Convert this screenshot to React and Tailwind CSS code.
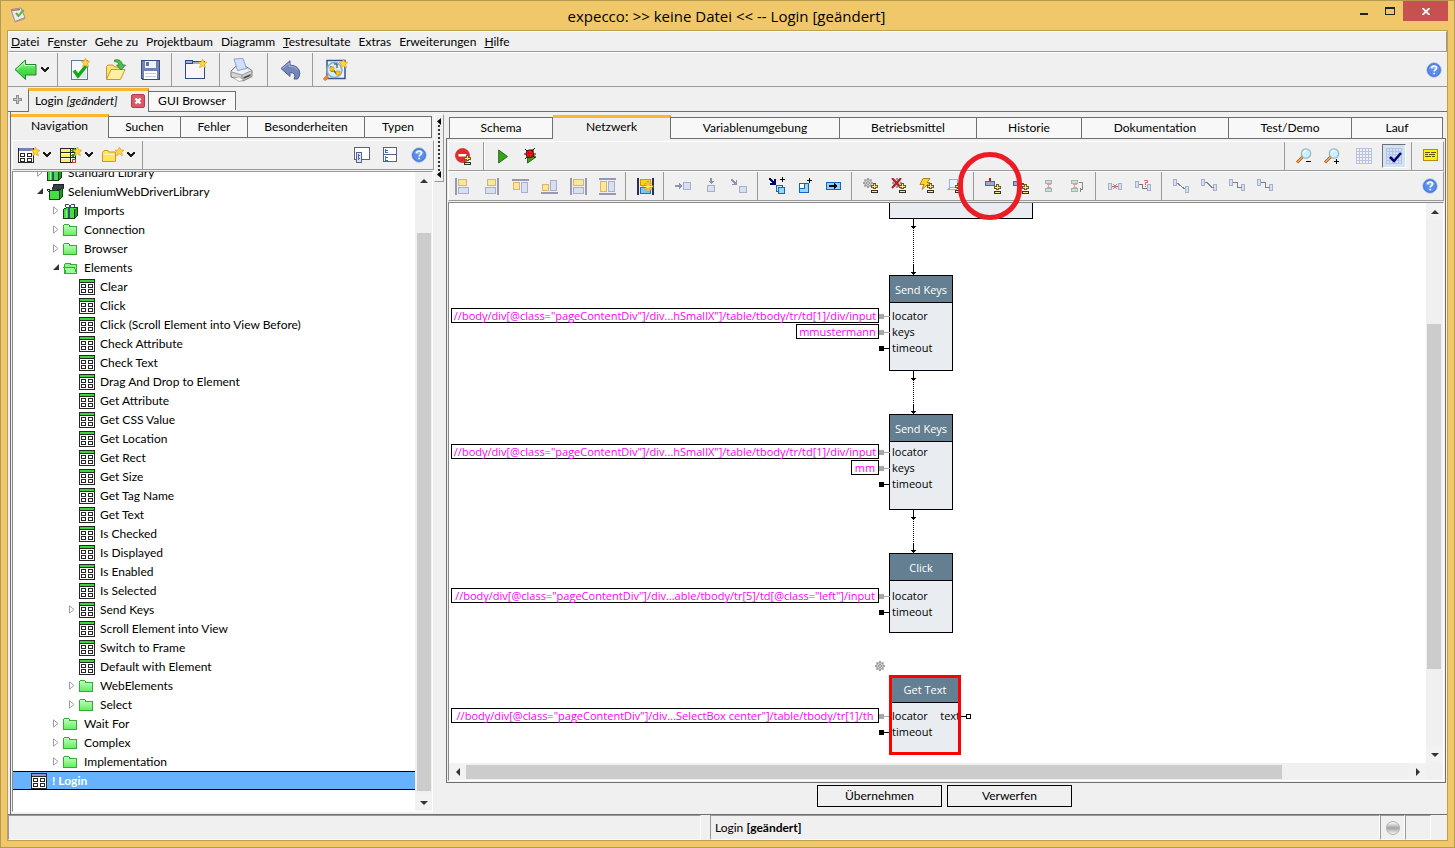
import React, { useState } from 'react';

const menus = [
    ['', 'D', 'atei'], ['F', 'e', 'nster'], ['Gehe zu', '', ''], ['Projektbaum', '', ''], ['Diagramm', '', ''],
    ['', 'T', 'estresultate'], ['Extras', '', ''], ['Erweiterungen', '', ''], ['', 'H', 'ilfe'],
];

// [level, icon, label, arrow]
const treeRows = [
    [1, 'lib', 'Standard Library', 'closed'],
    [1, 'openlib', 'SeleniumWebDriverLibrary', 'open'],
    [2, 'lib', 'Imports', 'closed'],
    [2, 'folder', 'Connection', 'closed'],
    [2, 'folder', 'Browser', 'closed'],
    [2, 'openfolder', 'Elements', 'open'],
    [3, 'block', 'Clear'],
    [3, 'block', 'Click'],
    [3, 'block', 'Click (Scroll Element into View Before)'],
    [3, 'block', 'Check Attribute'],
    [3, 'block', 'Check Text'],
    [3, 'block', 'Drag And Drop to Element'],
    [3, 'block', 'Get Attribute'],
    [3, 'block', 'Get CSS Value'],
    [3, 'block', 'Get Location'],
    [3, 'block', 'Get Rect'],
    [3, 'block', 'Get Size'],
    [3, 'block', 'Get Tag Name'],
    [3, 'block', 'Get Text'],
    [3, 'block', 'Is Checked'],
    [3, 'block', 'Is Displayed'],
    [3, 'block', 'Is Enabled'],
    [3, 'block', 'Is Selected'],
    [3, 'block', 'Send Keys', 'closed'],
    [3, 'block', 'Scroll Element into View'],
    [3, 'block', 'Switch to Frame'],
    [3, 'block', 'Default with Element'],
    [3, 'folder', 'WebElements', 'closed'],
    [3, 'folder', 'Select', 'closed'],
    [2, 'folder', 'Wait For', 'closed'],
    [2, 'folder', 'Complex', 'closed'],
    [2, 'folder', 'Implementation', 'closed'],
    [0, 'test', '! Login'],
];

const indent = ['pl-[7px]', 'pl-[23px]', 'pl-[39px]', 'pl-[55px]'];

/* ---------- icons ---------- */

const Svg = ({ w = 16, h = 16, crisp = true, children }) => (
    <svg width={w} height={h} viewBox={`0 0 ${w} ${h}`} className="shrink-0" fill="none" shapeRendering={crisp ? 'crispEdges' : 'auto'}>
        {children}
    </svg>
);

const Star = ({ x = 0, y = 0 }) => (
    <path transform={`translate(${x} ${y})`} d="M4.5 0 L5.8 3 L9 3.2 L6.6 5.4 L7.5 8.8 L4.5 7 L1.6 8.8 L2.4 5.4 L0 3.2 L3.2 3Z" fill="#ffd83d" stroke="#e0a32e" strokeWidth=".7" shapeRendering="auto" />
);

const PlusMinus = ({ x = 0, y = 0 }) => (
    <g transform={`translate(${x} ${y})`}>
        <path d="M2 0h3v2h2v3h-2v1h-3v-1h-2v-3h2z" fill="#6b5a28" />
        <path d="M0 7h7v3h-7z" fill="#3a3320" />
        <path d="M3 1h1v2h2v1h-2v1h-1v-1h-2v-1h2zM1 8h5v1h-5z" fill="#ffe680" />
    </g>
);

const Gear = ({ x = 0, y = 0 }) => (
    <g transform={`translate(${x} ${y})`} shapeRendering="auto">
        <path d="M5 0v10M0 5h10M1.500 1.500l7 7M8.500 1.500l-7 7" stroke="#8a8a8a" strokeWidth="1.600" />
        <circle cx="5" cy="5" r="3.400" fill="#dadada" stroke="#8e8e8e" strokeWidth=".9" />
        <circle cx="5" cy="5" r="1.400" fill="#fafafa" stroke="#7a7a7a" strokeWidth=".9" />
    </g>
);

const Caret = () => (
    <Svg w={8} h={6}>
        <path d="M0 0h2v1h1v1h2v-1h1v-1h2v2h-1v1h-1v1h-1v1h-2v-1h-1v-1h-1v-1h-1z" fill="#1c1c1c" />
    </Svg>
);

const AppIcon = () => (
    <Svg w={16} h={16} crisp={false}>
        <path d="M1 2.500l10-1.500 4 9.500-10 4z" fill="#e9edf2" stroke="#8e9297" />
        <path d="M1 2.500l4 12 10-4v1.500l-10 3.500z" fill="#c98872" />
        <path d="M2 3.500l8-1" stroke="#d06a55" strokeWidth="1.500" />
        <path d="M6 6l2.500 3 5-6" stroke="#5db347" strokeWidth="2" />
    </Svg>
);

const HelpIcon = () => (
    <Svg w={16} h={16} crisp={false}>
        <circle cx="8" cy="8" r="7.200" fill="#5b8df0" stroke="#a9c3ea" />
        <circle cx="8" cy="8" r="6.300" stroke="#4269c4" strokeWidth=".8" />
        <path d="M3 6a5.500 4.500 0 0 1 10 0q-5 2.500-10 0z" fill="#9dbcf8" opacity=".7" />
        <path d="M5.700 6.300q0-2.300 2.400-2.300 2.300 0 2.300 2 0 1.200-1.300 1.900-.9.500-.9 1.500M8.200 10.700v1.600" stroke="#fff" strokeWidth="1.700" />
    </Svg>
);

const BackIcon = () => (
    <Svg w={23} h={21} crisp={false}>
        <defs>
            <linearGradient id="back" x1="0" y1="0" x2="0" y2="1"><stop offset="0" stopColor="#a8f59a" /><stop offset=".5" stopColor="#4be04b" /><stop offset="1" stopColor="#36c93a" /></linearGradient>
        </defs>
        <path d="M1 10.500L11.500 1v4.500h10.500v10.500h-10.500v4.500z" fill="url(#back)" stroke="#23892a" />
        <path d="M3 10.500L10.500 3.500v3h10.500" stroke="#d3ffcb" />
    </Svg>
);

const NewTestIcon = () => (
    <Svg w={21} h={23} crisp={false}>
        <rect x="1.500" y="2.500" width="16" height="19" fill="#f5f9fd" stroke="#60789b" />
        <path d="M3 20h13v-13z" fill="#dbe7f4" />
        <path d="M4 12.500l4 5.500 8-10" stroke="#12a812" strokeWidth="3.400" />
        <Star x={11} y={0} />
    </Svg>
);

const OpenIcon = () => (
    <Svg w={22} h={22} crisp={false}>
        <path d="M1.500 20.500v-13l1.500-1.500h5l1.500 2h7v3" fill="#ffe27a" stroke="#cf9620" />
        <path d="M1.500 20.500l4.500-10h14l-4.500 10z" fill="#fff0a6" stroke="#cf9620" />
        <path d="M9.500 1q7-1.500 8 5h3l-4.500 5-4.500-5h2.800q-.5-3.500-4.800-3.500z" fill="#4bc24b" stroke="#258a2c" strokeWidth=".9" />
    </Svg>
);

const SaveIcon = () => (
    <Svg w={19} h={20}>
        <path d="M1 .5h17.500v19h-16.500l-1.500-1.500v-17z" fill="#6f83b4" stroke="#3b4c80" />
        <rect x="4" y="1" width="11" height="7" fill="#eef1f8" />
        <rect x="5" y="2" width="3" height="4" fill="#5f73a6" />
        <rect x="3" y="11" width="13" height="8" fill="#fff" />
        <path d="M4 13.500h11M4 16.500h11" stroke="#c2cce2" />
    </Svg>
);

const NewWindowIcon = () => (
    <Svg w={24} h={21}>
        <rect x="1.500" y="2.500" width="19" height="17" fill="#f8f6fa" stroke="#304a80" />
        <path d="M1.500 1.500h7v3h-7z" fill="#9fb0d8" stroke="#304a80" />
        <path d="M9 4h11" stroke="#9fb0d8" strokeWidth="2" />
        <Star x={14} y={0} />
    </Svg>
);

const PrintIcon = () => (
    <Svg w={24} h={24} crisp={false}>
        <path d="M1 13l5-5 3 2.500 7-2 6 4v6l-9 4.500-12-4z" fill="#d4d4d4" stroke="#7a7a7a" />
        <path d="M1.500 13.500l5-4 15 2.500-9.500 5z" fill="#f2f2f2" />
        <path d="M4 1l9-.500 3.500 10-9 2z" fill="#cfe0fa" stroke="#8ba3cc" />
        <path d="M1.500 14l10.500 3 10-4.500" stroke="#9a9a9a" />
        <path d="M12 17v5.500" stroke="#8a8a8a" />
        <path d="M13.500 19l7-3v2l-7 3z" fill="#4c4c4c" />
        <path d="M4 20l5-1 5 3-5 1.500z" fill="#fafafa" stroke="#999" strokeWidth=".7" />
    </Svg>
);

const UndoIcon = () => (
    <Svg w={21} h={20} crisp={false}>
        <path d="M1 8.500L10 .800v4.200q9 .500 9.800 8 0 3.500-2.300 6h-3.500q3-6-4-6.500v4z" fill="#7387bb" stroke="#4c5f93" />
        <path d="M2.500 8.500l6.500-5.500v3q6 0 8.500 3.500" stroke="#a8b7dd" />
    </Svg>
);

const SearchTestIcon = () => (
    <Svg w={26} h={22} crisp={false}>
        <rect x="4" y="1.500" width="18" height="18" fill="#f2f5fb" stroke="#3a5288" strokeWidth="1.500" />
        <path d="M1 21l4-4" stroke="#e8843a" strokeWidth="3.500" />
        <circle cx="11.500" cy="11" r="7.500" fill="#d5edf7" stroke="#7fb0c8" strokeWidth="1.600" />
        <path d="M8 7v5h4v2h4M11 5h3v4" stroke="#303030" />
        <path d="M7 8h4v4h-4zM13 12h4v4h-4z" fill="#ffc61a" stroke="#c98e10" strokeWidth=".6" />
        <Star x={16} y={0} />
    </Svg>
);

const BlockIcon = ({ head = '#38d838' }) => (
    <Svg w={16} h={16}>
        <rect x=".5" y=".5" width="15" height="15" fill="#fff" stroke="#262626" />
        <rect x="1" y="1" width="14" height="2" fill={head} />
        <path d="M1 3.500h14" stroke="#262626" />
        <path d="M2.500 5.500h4v3h-4zM9.500 5.500h4v3h-4zM2.500 10.500h4v3h-4zM9.500 10.500h4v3h-4z" stroke="#262626" />
    </Svg>
);

const NewBlockIcon = () => (
    <Svg w={22} h={17}>
        <rect x=".5" y="1.500" width="15" height="14" fill="#fff" stroke="#262626" />
        <rect x="1" y="1" width="14" height="3" fill="#7383bd" />
        <path d="M2.500 6.500h4v3h-4zM9.500 6.500h4v3h-4zM2.500 11.500h4v3h-4zM9.500 11.500h4v3h-4z" stroke="#262626" />
        <Star x={13} y={0} />
    </Svg>
);

const NewSuiteIcon = () => (
    <Svg w={22} h={17}>
        <path d="M.5 1.500h15v14h-15z" fill="#fff" stroke="#262626" />
        <path d="M1 2h10v3h-10zM1 7h10v3h-10zM1 12h10v3h-10z" fill="#fff06a" />
        <path d="M1 5.500h15M1 10.500h15M10.500 1v15" stroke="#262626" />
        <path d="M12 3l1 1 2-2M12 8l1 1 2-2" stroke="#18a018" strokeWidth="1.500" />
        <path d="M12 12h3v3h-3z" fill="#fff" stroke="#e03020" />
        <Star x={13} y={0} />
    </Svg>
);

const NewFolderIcon = () => (
    <Svg w={22} h={16} crisp={false}>
        <path d="M.5 14.500v-9l1.500-2h4l1 1.500h6.500v9.500z" fill="#ffe45c" stroke="#d29a1c" />
        <path d="M1.500 7.500h11" stroke="#fff6b8" />
        <Star x={13} y={0} />
    </Svg>
);

const PaneIcon = () => (
    <Svg w={16} h={16}>
        <rect x=".5" y=".5" width="15" height="12" fill="#fff" stroke="#5e5e8c" />
        <rect x="2.500" y="5.500" width="5" height="10" fill="#d8e8f8" stroke="#5e5e8c" />
        <path d="M4.500 7v6M5 8.500h1M5 11.500h1" stroke="#3a70b0" />
    </Svg>
);

const SplitIcon = () => (
    <Svg w={15} h={16}>
        <rect x=".5" y=".5" width="13" height="14" fill="#fff" stroke="#5e5e8c" />
        <path d="M1 7.500h13" stroke="#5e5e8c" />
        <path d="M2.500 2v4M3 3.500h2M3 5.500h2M2.500 9v5M3 10.500h2M3 13.500h2" stroke="#2f78b8" />
    </Svg>
);

const FolderIcon = () => (
    <Svg w={14} h={12}>
        <defs>
            <linearGradient id="fold" x1="0" y1="0" x2="0" y2="1"><stop offset="0" stopColor="#c4ffc0" /><stop offset="1" stopColor="#5fee5c" /></linearGradient>
        </defs>
        <path d="M.5 11.500v-9.500l1-1.500h4l1.500 2h6.500v9z" fill="url(#fold)" stroke="#35ad35" />
    </Svg>
);

const OpenFolderIcon = () => (
    <Svg w={15} h={12}>
        <path d="M1.500 11.500v-9l1-1.500h4l1.500 1.500h5.500v9z" fill="#8df58a" stroke="#35ad35" />
        <path d="M3 11.500l-2-6h10.500l2 6z" fill="#9dfb98" stroke="#35ad35" />
    </Svg>
);

const LibIcon = () => (
    <Svg w={15} h={16}>
        <path d="M.5 6.500l3-2h10.500v8l-3 3h-10.500z" fill="#45dd45" stroke="#1c3a1c" />
        <path d="M11 7v8l3-2.500v-8z" fill="#229a22" />
        <path d="M11.500 6v9" stroke="#1c3a1c" />
        <path d="M6 5v10" stroke="#3c4c7c" strokeWidth="2" />
        <path d="M3.500 7v8" stroke="#8df58a" />
        <path d="M2.500 3.500v-2h3l1.500 2 1.500-2h3v2M4 4.500h7" stroke="#3c4c60" />
    </Svg>
);

const OpenLibIcon = () => (
    <Svg w={17} h={16}>
        <path d="M5 5l2-5h9.500v4l-2 2z" fill="#3a4048" stroke="#15181c" strokeWidth=".8" />
        <path d="M2.500 6.500h9.500v9h-9.500z" fill="#45dd45" stroke="#15401c" />
        <path d="M12 6.500l3-2v8.500l-3 2.500z" fill="#229a22" stroke="#15401c" />
        <path d="M0 5.500h3M.5 6l2 3" stroke="#15401c" />
    </Svg>
);

const treeIcons = {
    lib: <LibIcon />,
    openlib: <OpenLibIcon />,
    folder: <FolderIcon />,
    openfolder: <OpenFolderIcon />,
    block: <BlockIcon />,
    test: <BlockIcon head="#8c97d0" />,
};

const StopIcon = () => (
    <Svg w={17} h={17} crisp={false}>
        <circle cx="7.500" cy="7.500" r="7" fill="#e32b2b" stroke="#c93232" strokeWidth=".8" />
        <rect x="3.500" y="6" width="8" height="2.500" fill="#fff" />
        <g shapeRendering="crispEdges"><PlusMinus x={9} y={7} /></g>
    </Svg>
);

const PlayIcon = () => (
    <Svg w={10} h={15} crisp={false}>
        <path d="M.7 1l8.800 6.500-8.800 6.500z" fill="#38a31c" stroke="#1c6f10" />
    </Svg>
);

const BugIcon = () => (
    <Svg w={13} h={16} crisp={false}>
        <path d="M3.500 2.500l8.500 6.500-8.500 6z" fill="#38a31c" stroke="#1c6f10" />
        <path d="M1 1l3 3M11 0l-3 3M0 6h3M9 6h3M1 11l3-3M9 8l2 2" stroke="#111" />
        <ellipse cx="5.800" cy="5.800" rx="3.800" ry="4" fill="#f01414" stroke="#400" strokeWidth=".8" />
        <circle cx="4.500" cy="5" r=".6" fill="#200" /><circle cx="7.300" cy="5.500" r=".6" fill="#200" /><circle cx="5.500" cy="8" r=".6" fill="#200" />
        <path d="M6.500 1.500h3v2.500z" fill="#111" />
    </Svg>
);

const ZoomIcon = ({ plus }) => (
    <Svg w={17} h={17} crisp={false}>
        <path d="M1 14.500l6-6" stroke="#b5601c" strokeWidth="3" /><path d="M1.500 14l5-5" stroke="#f2a65a" strokeWidth="1.200" />
        <circle cx="10" cy="5.500" r="4.700" fill="#cdeefa" stroke="#8fb6c8" strokeWidth="1.200" />
        <path d="M7.500 5a2.700 2.700 0 0 1 3-2.500" stroke="#fff" strokeWidth="1.300" />
        <path d={plus ? 'M10 13.500h5M12.500 11v5' : 'M10 13.500h5'} stroke="#000" shapeRendering="crispEdges" />
    </Svg>
);

const GridIcon = ({ check }) => (
    <Svg w={17} h={17}>
        <path d="M.5 0v16M3.500 0v16M6.500 0v16M9.500 0v16M12.500 0v16M15.500 0v16M0 .5h16M0 3.500h16M0 6.500h16M0 9.500h16M0 12.500h16M0 15.500h16" stroke="#b9c3e0" />
        {check && <path d="M4 9l4 4 7-8" stroke="#00007a" strokeWidth="2.500" shapeRendering="auto" />}
    </Svg>
);

const NoteIcon = () => (
    <Svg w={15} h={12}>
        <rect x=".5" y=".5" width="14" height="11" rx="1" fill="#fff200" stroke="#b8891c" />
        <path d="M2 3.500h5M8 3.500h5M2 5.500h3M6 5.500h6M2 7.500h6M9 7.500h3" stroke="#5c5200" />
    </Svg>
);

const Y = { fill: '#fbe69a', stroke: '#d9b46a' };
const B = { fill: '#d8dfef', stroke: '#a5afd0' };

const alignIcons = [
    ['links', <Svg w={15} h={17}><path d="M1 0v17" stroke="#9a97b0" strokeWidth="2" /><rect x="3.500" y="1.500" width="8" height="6" {...Y} /><rect x="3.500" y="9.500" width="10" height="6" {...B} /></Svg>],
    ['rechts', <Svg w={15} h={17}><path d="M14 0v17" stroke="#9a97b0" strokeWidth="2" /><rect x="3.500" y="1.500" width="8" height="6" {...Y} /><rect x="1.500" y="9.500" width="10" height="6" {...B} /></Svg>],
    ['oben', <Svg w={17} h={15}><path d="M0 1h17" stroke="#9a97b0" strokeWidth="2" /><rect x="1.500" y="3.500" width="6" height="7" {...Y} /><rect x="9.500" y="3.500" width="6" height="10" {...B} /></Svg>],
    ['unten', <Svg w={17} h={15}><path d="M0 14h17" stroke="#9a97b0" strokeWidth="2" /><rect x="1.500" y="5.500" width="6" height="6" {...Y} /><rect x="9.500" y="1.500" width="6" height="10" {...B} /></Svg>],
    ['horizontal', <Svg w={17} h={17}><path d="M1 0v17M16 0v17" stroke="#9a97b0" strokeWidth="2" /><rect x="3.500" y="1.500" width="10" height="6" {...Y} /><rect x="3.500" y="9.500" width="10" height="6" {...B} /></Svg>],
    ['vertikal', <Svg w={17} h={17}><path d="M0 1h17M0 16h17" stroke="#9a97b0" strokeWidth="2" /><rect x="1.500" y="3.500" width="6" height="10" {...Y} /><rect x="9.500" y="3.500" width="6" height="10" {...B} /></Svg>],
];

const AutoAlignIcon = () => (
    <Svg w={17} h={17}>
        <path d="M1 0v17M16 0v17" stroke="#2d2d50" strokeWidth="2" />
        <rect x="3.500" y="1.500" width="10" height="6" fill="#ffd21c" stroke="#e08a10" />
        <rect x="3.500" y="9.500" width="10" height="6" fill="#7cc8f5" stroke="#1c6bd0" />
        <path d="M11 3v11M5.500 8.500h11M7.500 5l7 7M14.500 5l-7 7" stroke="#f08c10" strokeWidth="2" shapeRendering="auto" />
        <path d="M11 4v9M6.500 8.500h9M8 5.500l6 6M14 5.500l-6 6" stroke="#fff36a" shapeRendering="auto" />
    </Svg>
);

const insertIcons = [
    ['Eingang', <Svg><path d="M0 7h4v-2l3 3-3 3v-2h-4z" fill="#8f93ac" /><rect x="8.500" y="4.500" width="7" height="7" {...B} /></Svg>],
    ['Eingang oben', <Svg w={10}><path d="M4 0h2v3h2l-3 3-3-3h2z" fill="#8f93ac" /><rect x="1.500" y="7.500" width="7" height="6" {...B} /></Svg>],
    ['Eingang diagonal', <Svg><path d="M0 1h2v1h1v1h1v1h1v-2h1v5h-5v-1h2v-1h-1v-1h-1v-1h-1z" fill="#8f93ac" /><rect x="8.500" y="8.500" width="7" height="6" {...B} /></Svg>],
];

const stepIcons = [
    ['Schritt', <Svg w={17} h={18}><path d="M0 1h2v1h1v1h1v1h1v-2h2v6h-6v-2h2v-1h-1v-1h-1v-1h-1z" fill="#000080" /><path d="M11 2.500h5M13.500 0v5" stroke="#000" /><rect x="7.500" y="8.500" width="6" height="6" fill="#cfeaff" stroke="#1464c8" /><rect x="9.500" y="10.500" width="6" height="6" fill="#9ad4ff" stroke="#1464c8" /></Svg>],
    ['Block', <Svg w={14} h={16}><path d="M9 2.500h5M11.500 0v5" stroke="#000" /><rect x="1.500" y="5.500" width="9" height="9" fill="#9ad4ff" stroke="#1464c8" /><rect x="1.500" y="5.500" width="5" height="5" fill="#fff" stroke="#1464c8" /></Svg>],
    ['Konvertieren', <Svg w={15} h={8}><rect x=".5" y=".5" width="14" height="7" fill="#8fd0ff" stroke="#1464c8" /><path d="M3 4h6" stroke="#000" strokeWidth="2" /><path d="M8 1l4 3-4 3z" fill="#000" /></Svg>],
];

const triggerIcons = [
    ['Aktivierung', <Svg><Gear /><PlusMinus x={8} y={5} /></Svg>],
    ['Deaktivierung', <Svg><Gear x={1} /><path d="M1 0l9 10M10 0l-9 10" stroke="#b81c28" strokeWidth="2" shapeRendering="auto" /><PlusMinus x={8} y={5} /></Svg>],
    ['Ausnahme', <Svg><path d="M4 .5h7l-3 4h3l-8 7 2-5h-4z" fill="#ffd624" stroke="#b8801c" shapeRendering="auto" /><PlusMinus x={8} y={5} /></Svg>],
    ['Notiz', <Svg><path d="M2.500 1.500h8v8h-8z" fill="#eaf4ff" stroke="#8fb5e0" /><path d="M1 11.500l2-2h8l-2 2z" fill="#fff" stroke="#8fb5e0" /><PlusMinus x={8} y={5} /></Svg>],
];

const pinIcons = [
    ['Pin oben', <Svg><path d="M5 0v4" stroke="#b01c28" strokeWidth="2" /><rect x=".5" y="3.500" width="9" height="4" fill="#9fa8cc" stroke="#5a6490" /><PlusMinus x={9} y={6} /></Svg>],
    ['Pin rechts', <Svg><rect x=".5" y="3.500" width="7" height="4" fill="#9fa8cc" stroke="#5a6490" /><path d="M8 6h3" stroke="#b01c28" strokeWidth="2" /><PlusMinus x={9} y={6} /></Svg>],
    ['Verbinden', <Svg w={10} h={13}><rect x="1.500" y=".5" width="6" height="3" fill="#cfdbdd" stroke="#a8b2b6" /><rect x="1.500" y="8.500" width="6" height="3" fill="#cfdbdd" stroke="#a8b2b6" /><path d="M3 4.500h4M4.500 4v4M3 7.500h4" stroke="#ef9a90" /></Svg>],
    ['Verbindung drehen', <Svg w={13} h={13}><rect x=".5" y=".5" width="6" height="3" fill="#cfdbdd" stroke="#a8b2b6" /><rect x=".5" y="8.500" width="6" height="3" fill="#cfdbdd" stroke="#a8b2b6" /><path d="M2 4.500h4M3.500 4v4M2 7.500h4" stroke="#ef9a90" /><path d="M8 2.500h3.500v7h-3M9.500 7.500v4" stroke="#8a8a8a" /></Svg>],
];

const checkIcons = [
    ['Trennen', <Svg w={15} h={9}><rect x=".5" y="1.500" width="3" height="6" {...B} /><rect x="10.500" y="1.500" width="3" height="6" {...B} /><path d="M4 4.500h6" stroke="#777" /><path d="M5 2l4 5M9 2l-4 5" stroke="#e07070" /></Svg>],
    ['Umleiten', <Svg w={17} h={12}><rect x=".5" y="1.500" width="3" height="6" {...B} /><rect x="12.500" y="4.500" width="3" height="6" {...B} /><path d="M4 4.500h3v4h5" stroke="#777" /><path d="M9 .5h3v2h-2v2M10 5.500v1" stroke="#e07070" /></Svg>],
];

const routeIcons = [
    ['Direkt', 'M4 4l8 6', 7],
    ['Diagonal', 'M4 3.500h2l5 5h2', 5],
    ['Gebogen', 'M4 3.500h4v3l1 2h4', 5],
    ['Rechtwinklig', 'M4 3.500h4v5h5', 5],
].map(([name, d, y]) => [name, (
    <Svg w={17} h={14}><rect x=".5" y=".5" width="3" height="6" {...B} /><rect x="12.500" y={y + 0.5} width="3" height="6" {...B} /><path d={d} stroke="#80808a" /></Svg>
)]);

/* ---------- small parts ---------- */

const ToolGroup = ({ items, last }) => (
    <div className={`flex items-center pr-1 pl-[5px] ${last ? '' : 'border-r border-[#9a9a9a]'}`}>
        {items.map(([name, icon]) => (
            <button key={name} aria-label={name} className="flex h-7 w-7 items-center justify-center">{icon}</button>
        ))}
    </div>
);

const ArrowButton = ({ d, label }) => (
    <button aria-label={label} className="flex h-[17px] w-[17px] shrink-0 items-center justify-center bg-[#f2f2f2]">
        <svg width="8" height="8" viewBox="0 0 8 8" fill="#333"><path d={d} /></svg>
    </button>
);

const TabStrip = ({ tabs, active, onSelect, cols }) => (
    <div role="tablist" className={`grid flex-1 ${cols}`}>
        {tabs.map((t, i) => (
            <button
                key={t}
                role="tab"
                aria-selected={t === active}
                onClick={() => onSelect(t)}
                className={t === active
                    ? 'flex items-center justify-center border-r border-t-3 border-[#6f6f6f] border-t-[#fdb52e] bg-[#f0f0f0] pb-1'
                    : `mt-[2px] flex items-center justify-center border-t border-r border-b border-[#6f6f6f] bg-[#f8f8f8] ${i === 0 ? 'border-l' : ''}`}
            >
                {t}
            </button>
        ))}
    </div>
);

function TreePanel() {
    const [selected, setSelected] = useState('! Login');

    return (
        <div className="mx-px mt-px flex min-h-0 flex-1 border border-t-[#9a9a9a] border-r-white border-b-white border-l-[#8a8a8a]">
            <ul role="tree" className="min-w-0 flex-1 overflow-hidden bg-white">
                {treeRows.map(([level, icon, label, arrow], i) => (
                    <li
                        key={i}
                        role="treeitem"
                        aria-selected={label === selected}
                        onClick={() => setSelected(label)}
                        className={`flex h-[19px] items-center whitespace-nowrap ${indent[level]} ${i === 0 ? '-mt-[9px]' : ''} ${label === selected ? 'border-y border-black bg-[#66b2ff] font-bold text-white' : ''}`}
                    >
                        <span className="flex w-[11px] shrink-0 items-center pl-px">
                            {arrow === 'closed' && <svg width="6" height="9" viewBox="0 0 6 9" fill="#fff" stroke="#a0a0a0"><path d="M.5 .8v7.400l4.500-3.700z" /></svg>}
                            {arrow === 'open' && <svg width="7" height="7" viewBox="0 0 7 7" fill="#333"><path d="M6 0v6h-6z" /></svg>}
                        </span>
                        <span className="mr-[5px] flex w-4 shrink-0 items-center">{treeIcons[icon]}</span>
                        {label}
                    </li>
                ))}
            </ul>
            <div className="flex w-[17px] flex-col bg-[#f0f0f0]">
                <ArrowButton label="Nach oben" d="M0 6l4-4 4 4z" />
                <div className="grow-[44] basis-0" />
                <div className="mr-px ml-[2px] grow-[558] basis-0 bg-[#cccccc]" />
                <div className="grow-[3] basis-0" />
                <ArrowButton label="Nach unten" d="M0 2l4 4 4-4z" />
            </div>
        </div>
    );
}

const Pin = ({ label, wired }) => (
    <div className="flex h-4 items-center">
        <span className={`-ml-[11px] h-[5px] w-[5px] ${wired ? 'bg-[#a8a8a8]' : 'bg-black'}`} />
        <span className={`h-px w-[6px] ${wired ? 'bg-[#a8a8a8]' : 'bg-black'}`} />
        <span className="pl-[2px]">{label}</span>
    </div>
);

const Node = ({ title, pins, className, selected, output, gap = 'pt-[5px]' }) => (
    <div className={`absolute flex flex-col border border-black bg-[#e9edf1] text-[11px] leading-4 ${selected ? 'outline-3 -outline-offset-3 outline-[#ff0000]' : ''} ${className}`}>
        <div className="flex h-[27px] shrink-0 items-center justify-center border-b border-black bg-[#637f91] pt-[2px] text-white">{title}</div>
        <div className={`flex justify-between ${gap}`}>
            <div>
                {pins.map((p) => <Pin key={p} label={p} wired={p !== 'timeout'} />)}
            </div>
            {output && (
                <div className="flex h-4 items-center">
                    <span>{output}</span>
                    <span className="h-px w-[6px] bg-black" />
                    <span className="-mr-[11px] h-[5px] w-[5px] border border-black bg-white" />
                </div>
            )}
        </div>
    </div>
);

const Value = ({ children, className }) => (
    <div className={`absolute flex h-[15px] items-center justify-center border border-black bg-white text-[11px] leading-3 whitespace-nowrap text-[#ff00ff] ${className}`}>{children}</div>
);

// control flow between two steps
const Flow = ({ y1, y2 }) => (
    <g transform="translate(464 0)" stroke="#000">
        <path d={`M.5 ${y1}v10M.5 ${y2 - 10}v10`} />
        <path d={`M.5 ${y1 + 11}V${y2 - 10}`} strokeDasharray="1 1" />
        <path d={`M-2 ${y1 + 7}h5l-2 3h-1zM-2 ${y2 - 3}h5l-2 3h-1z`} fill="#000" stroke="none" />
    </g>
);

function Diagram() {
    return (
        <div className="relative min-w-0 flex-1 overflow-hidden bg-white font-['Open_Sans',sans-serif]">
            <svg className="absolute top-0 left-0" width="700" height="560" fill="none" shapeRendering="crispEdges">
                <Flow y1={16} y2={72} />
                <Flow y1={168} y2={211} />
                <Flow y1={307} y2={350} />
                <Gear x={426} y={458} />
            </svg>
            <div className="absolute -top-px left-[440px] h-[17px] w-[144px] border border-black bg-[#e9edf1]" />
            <Node title="Send Keys" pins={['locator', 'keys', 'timeout']} className="top-[72px] left-[440px] h-[96px] w-[64px]" />
            <Value className="top-[105px] left-[2px] w-[428px]">//body/div[@class="pageContentDiv"]/div...hSmallX"]/table/tbody/tr/td[1]/div/input</Value>
            <Value className="top-[121px] left-[347px] w-[83px]">mmustermann</Value>
            <Node title="Send Keys" pins={['locator', 'keys', 'timeout']} gap="pt-[2px]" className="top-[211px] left-[440px] h-[96px] w-[64px]" />
            <Value className="top-[241px] left-[2px] w-[428px]">//body/div[@class="pageContentDiv"]/div...hSmallX"]/table/tbody/tr/td[1]/div/input</Value>
            <Value className="top-[257px] left-[402px] w-[28px]">mm</Value>
            <Node title="Click" pins={['locator', 'timeout']} gap="pt-[7px]" className="top-[350px] left-[440px] h-[80px] w-[64px]" />
            <Value className="top-[385px] left-[2px] w-[428px]">//body/div[@class="pageContentDiv"]/div...able/tbody/tr[5]/td[@class="left"]/input</Value>
            <Node title="Get Text" pins={['locator', 'timeout']} output="text" selected className="top-[472px] left-[440px] h-[80px] w-[72px]" />
            <Value className="top-[505px] left-[2px] w-[428px]">//body/div[@class="pageContentDiv"]/div...SelectBox center"]/table/tbody/tr[1]/th</Value>
        </div>
    );
}

function Editor() {
    const [tab, setTab] = useState('Netzwerk');

    return (
        <div className="mr-px flex min-w-0 flex-1 flex-col">
            <div className="mt-[3px] flex h-6">
                <div className="w-[3px] border-b border-[#6f6f6f]" />
                <TabStrip
                    tabs={['Schema', 'Netzwerk', 'Variablenumgebung', 'Betriebsmittel', 'Historie', 'Dokumentation', 'Test/Demo', 'Lauf']}
                    active={tab}
                    onSelect={setTab}
                    cols="grid-cols-[104fr_118fr_169fr_137fr_105fr_147fr_123fr_91fr]"
                />
                <div className="w-[3px] border-b border-[#6f6f6f]" />
            </div>
            <div className="flex min-h-0 flex-1 flex-col border-x border-b border-[#6f6f6f] px-px pb-px">
                <div className="mt-[2px] flex h-[30px] border border-t-white border-r-[#9a9a9a] border-b-[#9a9a9a] border-l-white">
                    <div className="flex w-[35px] items-center border-r border-[#9a9a9a] pl-[6px]"><button aria-label="Haltepunkt"><StopIcon /></button></div>
                    <div className="flex flex-1 items-center gap-[16px] border-l border-white pl-[13px]">
                        <button aria-label="Start"><PlayIcon /></button>
                        <button aria-label="Debuggen"><BugIcon /></button>
                    </div>
                    <div className="flex items-center border-x border-[#9a9a9a] px-[5px]">
                        <button aria-label="Verkleinern" className="flex w-7 justify-center"><ZoomIcon /></button>
                        <button aria-label="Vergrößern" className="flex w-7 justify-center"><ZoomIcon plus /></button>
                        <button aria-label="Raster" className="ml-1 flex w-7 justify-center"><GridIcon /></button>
                        <button aria-label="Am Raster ausrichten" className="ml-1 flex h-6 w-6 items-center justify-center border border-t-[#707070] border-r-white border-b-white border-l-[#707070] bg-[#cfe3f7]"><GridIcon check /></button>
                    </div>
                    <div className="flex w-[31px] items-center justify-center pb-[3px] pl-[5px]"><button aria-label="Notiz anzeigen"><NoteIcon /></button></div>
                </div>
                <div className="flex h-[30px] border border-t-white border-r-[#9a9a9a] border-b-[#9a9a9a] border-l-white">
                    <div className="flex w-[177px] items-center border-r border-[#9a9a9a]">
                        {alignIcons.map(([name, icon]) => (
                            <button key={name} aria-label={`Ausrichten ${name}`} className="flex h-7 w-[29px] items-center justify-center pr-[3px]">{icon}</button>
                        ))}
                    </div>
                    <ToolGroup items={[['Automatisch ausrichten', <AutoAlignIcon />]]} />
                    <ToolGroup items={insertIcons} />
                    <ToolGroup items={stepIcons} />
                    <ToolGroup items={triggerIcons} />
                    <div className="relative flex">
                        <ToolGroup items={pinIcons} />
                        <span className="pointer-events-none absolute -top-5 -left-4 z-10 h-[68px] w-16 rounded-full border-5 border-[#ed1c24]" />
                    </div>
                    <ToolGroup items={checkIcons} />
                    <ToolGroup items={routeIcons} last />
                    <button aria-label="Hilfe" className="mr-[5px] ml-auto"><HelpIcon /></button>
                </div>
                <div className="mt-px flex min-h-0 flex-1 flex-col border border-t-[#8a8a8a] border-r-white border-b-white border-l-[#8a8a8a] bg-[#f0f0f0]">
                    <div className="flex min-h-0 flex-1">
                        <Diagram />
                        <div className="flex w-[17px] flex-col">
                            <ArrowButton label="Nach oben" d="M0 6l4-4 4 4z" />
                            <div className="grow-[104] basis-0" />
                            <div className="mr-[2px] ml-px grow-[345] basis-0 bg-[#cccccc]" />
                            <div className="grow-[77] basis-0" />
                            <ArrowButton label="Nach unten" d="M0 2l4 4 4-4z" />
                        </div>
                    </div>
                    <div className="mr-[17px] flex h-[17px]">
                        <ArrowButton label="Nach links" d="M6 0v8l-4-4z" />
                        <div className="mt-[2px] mb-px grow-[815] basis-0 bg-[#cccccc]" />
                        <div className="grow-[127] basis-0" />
                        <ArrowButton label="Nach rechts" d="M2 0v8l4-4z" />
                    </div>
                </div>
            </div>
            <div className="flex h-[31px] justify-center gap-[5px] pt-[2px] pr-[3px]">
                <button className="h-[22px] w-[125px] border border-black">Übernehmen</button>
                <button className="h-[22px] w-[125px] border border-black">Verwerfen</button>
            </div>
        </div>
    );
}

function Navigation() {
    const [tab, setTab] = useState('Navigation');

    return (
        <div className="ml-[2px] flex w-[424px] shrink-0 flex-col border-l border-[#6f6f6f] pb-[2px]">
            <div className="mt-[2px] flex h-6">
                <TabStrip
                    tabs={['Navigation', 'Suchen', 'Fehler', 'Besonderheiten', 'Typen']}
                    active={tab}
                    onSelect={setTab}
                    cols="grid-cols-[98fr_72fr_67fr_117fr_67fr]"
                />
                <div className="w-[2px]" />
            </div>
            <div className="mt-[2px] ml-px flex h-[30px] items-center border border-t-white border-r-[#9a9a9a] border-b-[#9a9a9a] border-l-white pl-[5px]">
                <div className="flex h-full items-center gap-[2px] border-r border-[#9a9a9a] pr-[7px]">
                    <button aria-label="Neuer Block" className="flex w-10 items-center gap-[3px]"><NewBlockIcon /><Caret /></button>
                    <button aria-label="Neue Testsuite" className="flex w-10 items-center gap-[3px]"><NewSuiteIcon /><Caret /></button>
                    <button aria-label="Neuer Ordner" className="flex items-center gap-[3px]"><NewFolderIcon /><Caret /></button>
                </div>
                <div className="ml-auto flex items-center gap-[13px] pr-[6px]">
                    <button aria-label="Eigenes Fenster"><PaneIcon /></button>
                    <button aria-label="Teilen"><SplitIcon /></button>
                    <button aria-label="Hilfe"><HelpIcon /></button>
                </div>
            </div>
            <TreePanel />
        </div>
    );
}

const ToolSection = ({ children, className }) => (
    <div className={`flex items-center border-r border-[#9a9a9a] ${className}`}>{children}</div>
);

export default function App() {
    return (
        <div className="flex h-screen flex-col border border-[#b59a4f] bg-[#f0c869] px-[6px] pb-[6px] font-['Lato',sans-serif] text-[12px] leading-4 text-black">
            <header className="relative flex h-[29px] shrink-0 items-center justify-center">
                <span className="absolute top-[6px] left-[3px]"><AppIcon /></span>
                <h1 className="pr-[2px] font-['Open_Sans',sans-serif] text-[15px]">{'expecco: >> keine Datei << -- Login [geändert]'}</h1>
                <div className="absolute top-0 right-0 flex h-5">
                    <button aria-label="Minimieren" className="flex w-6 justify-center pt-3"><span className="h-[2px] w-2 bg-[#222]" /></button>
                    <button aria-label="Maximieren" className="flex w-[27px] justify-center pt-[6px]"><span className="h-2 w-[10px] border border-t-2 border-[#222]" /></button>
                    <button aria-label="Schließen" className="flex w-[45px] items-center justify-center bg-[#c75050]">
                        <svg width="8" height="7" viewBox="0 0 8 7" stroke="#fff" strokeWidth="1.800"><path d="M.5 0l7 7M7.500 0l-7 7" /></svg>
                    </button>
                </div>
            </header>

            <div className="flex min-h-0 flex-1 flex-col border border-[#c0a050] bg-[#f0f0f0]">
                <nav className="flex h-[21px] shrink-0 items-center gap-2 border border-t-white border-r-[#9a9a9a] border-b-[#9a9a9a] border-l-white pl-[2px]">
                    {menus.map(([a, u, b]) => (
                        <button key={a + u + b}>{a}<u>{u}</u>{b}</button>
                    ))}
                </nav>

                <div className="flex h-[35px] shrink-0 border-t border-b border-t-white border-b-[#9a9a9a]">
                    <ToolSection className="w-[50px] gap-[4px] pl-[6px]">
                        <button aria-label="Zurück"><BackIcon /></button>
                        <button aria-label="Verlauf"><Caret /></button>
                    </ToolSection>
                    <ToolSection className="w-[114px] gap-[14px] pl-3">
                        <button aria-label="Neue Testsuite"><NewTestIcon /></button>
                        <button aria-label="Öffnen"><OpenIcon /></button>
                        <button aria-label="Speichern"><SaveIcon /></button>
                    </ToolSection>
                    <ToolSection className="w-12 justify-center"><button aria-label="Neues Fenster"><NewWindowIcon /></button></ToolSection>
                    <ToolSection className="w-12 justify-center pr-1"><button aria-label="Drucken"><PrintIcon /></button></ToolSection>
                    <ToolSection className="w-[45px] justify-center"><button aria-label="Rückgängig"><UndoIcon /></button></ToolSection>
                    <div className="flex items-center pl-[10px]"><button aria-label="Test suchen"><SearchTestIcon /></button></div>
                    <button aria-label="Hilfe" className="mr-[5px] ml-auto"><HelpIcon /></button>
                </div>

                <div className="flex h-[25px] shrink-0">
                    <div className="flex w-5 items-center border-b border-[#6f6f6f] pl-[5px]">
                        <button aria-label="Neuer Reiter">
                            <Svg w={9} h={9}><path d="M3.500 .5h2v3h3v2h-3v3h-2v-3h-3v-2h3z" fill="#c4c4c4" stroke="#8f8f8f" /></Svg>
                        </button>
                    </div>
                    <div className="mt-px flex w-[121px] items-center border-x border-t-3 border-[#6f6f6f] border-t-[#fdb52e] pb-[2px] pl-[6px]">
                        <button>Login <i>[geändert]</i></button>
                        <button aria-label="Reiter schließen" className="mr-[3px] ml-auto">
                            <Svg w={14} h={14} crisp={false}>
                                <rect x=".5" y=".5" width="13" height="13" rx="1.500" fill="#dc5864" stroke="#b83c4c" />
                                <path d="M4.500 4.500l5 5M9.500 4.500l-5 5" stroke="#fff" strokeWidth="2.400" />
                            </Svg>
                        </button>
                    </div>
                    <div className="flex border-b border-[#6f6f6f] pt-[4px] pb-px">
                        <button className="w-[87px] border-t border-r border-[#6f6f6f] bg-[#f8f8f8]">GUI Browser</button>
                    </div>
                    <div className="flex-1 border-b border-[#6f6f6f]" />
                </div>

                <main className="flex min-h-0 flex-1">
                    <Navigation />
                    <div className="w-3 shrink-0 pt-[2px]">
                        <div className="flex h-[68px] w-[10px] flex-col items-center justify-between border border-t-white border-r-[#9a9a9a] border-b-[#9a9a9a] border-l-white py-[3px]">
                            <svg width="5" height="7" viewBox="0 0 5 7"><path d="M4 0v7l-4-3.500z" /></svg>
                            <span className="h-[46px] border-l-2 border-dotted border-[#333]" />
                            <svg width="5" height="7" viewBox="0 0 5 7"><path d="M4 0v7l-4-3.500z" /></svg>
                        </div>
                    </div>
                    <Editor />
                </main>

                <footer className="grid h-[26px] shrink-0 grid-cols-[693fr_9px_670fr_25px_26px_16px] border-t border-[#6f6f6f]">
                    <div className="border border-t-[#9a9a9a] border-r-white border-b-white border-l-[#9a9a9a]" />
                    <div />
                    <div className="flex items-center border border-t-[#9a9a9a] border-r-white border-b-white border-l-[#9a9a9a] pl-1">
                        <span>Login <b>[geändert]</b></span>
                    </div>
                    <div className="flex items-center justify-center border border-t-[#9a9a9a] border-r-white border-b-white border-l-[#9a9a9a]">
                        <span className="h-[14px] w-[14px] rounded-full border border-[#b0b0b0] bg-linear-to-b from-white via-[#a4a4a4] to-[#f4f4f4]" />
                    </div>
                    <div className="border border-t-[#9a9a9a] border-r-white border-b-white border-l-[#9a9a9a]" />
                    <div />
                </footer>
            </div>
        </div>
    );
}
